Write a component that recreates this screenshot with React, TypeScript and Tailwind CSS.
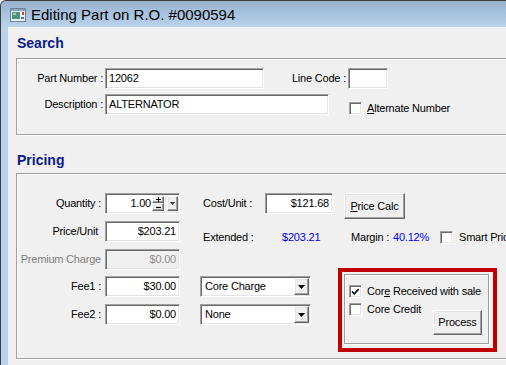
import React from 'react';

const sunken =
  'border border-t-[#a0a0a0] border-l-[#a0a0a0] border-r-white border-b-white shadow-[inset_1px_1px_0_#696969,inset_-1px_-1px_0_#e3e3e3]';
const raised =
  'border border-t-white border-l-white border-r-[#696969] border-b-[#696969] shadow-[inset_-1px_-1px_0_#a0a0a0,inset_1px_1px_0_#e3e3e3] bg-[#f0f0f0]';
const etched = 'border border-[#a0a0a0] shadow-[inset_1px_1px_0_#fff,1px_1px_0_#fff]';

const TextBox = ({
  value,
  w,
  right,
  disabled,
}: {
  value: string;
  w: string;
  right?: boolean;
  disabled?: boolean;
}) => (
  <div
    className={`${sunken} ${w} h-[21px] flex items-center px-[3px] whitespace-nowrap ${
      right ? 'justify-end' : ''
    } ${disabled ? 'bg-[#f0f0f0] text-[#8d8d8d]' : 'bg-white text-black'}`}
  >
    {value}
  </div>
);

const Arrow = () => (
  <svg width="7" height="4" viewBox="0 0 7 4">
    <path d="M0 0 H7 L3.5 4 Z" fill="#000" />
  </svg>
);

const Select = ({ value }: { value: string }) => (
  <div className={`${sunken} w-[111px] h-[21px] bg-white flex items-center p-[1px]`}>
    <div className="flex-1 pl-[3px] whitespace-nowrap">{value}</div>
    <div className={`${raised} w-[15px] h-[17px] flex items-center justify-center`}>
      <Arrow />
    </div>
  </div>
);

const Checkbox = ({ checked }: { checked?: boolean }) => (
  <div className={`${sunken} w-[13px] h-[13px] bg-white shrink-0 flex items-center justify-center`}>
    {checked && (
      <svg width="9" height="9" viewBox="0 0 9 9">
        <path d="M1 4.5 L3.3 6.8 L7.8 2" stroke="#000" strokeWidth="1.7" fill="none" />
      </svg>
    )}
  </div>
);

const Label = ({ children, gray }: { children: React.ReactNode; gray?: boolean }) => (
  <div
    className={`w-[84px] h-[21px] flex items-center justify-end whitespace-nowrap ${
      gray ? 'text-[#7d7d7d]' : ''
    }`}
  >
    {children}
  </div>
);

const QuantityBox = () => (
  <div className={`${sunken} w-[75px] h-[21px] flex p-[1px]`}>
    <div className="w-[45px] bg-white flex items-center justify-end pr-[1px]">1.00</div>
    <div className="flex-1 flex items-center bg-[#f0f0f0]">
      <div className="flex flex-col">
        <div className={`${raised} w-[12px] h-[7px] flex items-center justify-center`}>
          <svg width="5" height="5" viewBox="0 0 5 5">
            <path d="M2.5 0 V5 M0 2.5 H5" stroke="#000" strokeWidth="1" />
          </svg>
        </div>
        <div className={`${raised} w-[12px] h-[8px] flex items-center justify-center`}>
          <svg width="5" height="3" viewBox="0 0 5 3">
            <path d="M0 1.5 H5" stroke="#000" strokeWidth="1.2" />
          </svg>
        </div>
      </div>
      <div className={`${raised} ml-[3px] w-[11px] h-[15px] flex items-center justify-center`}>
        <svg width="5" height="3" viewBox="0 0 5 3">
          <path d="M0 0 H5 L2.5 3 Z" fill="#333" />
        </svg>
      </div>
    </div>
  </div>
);

const TitleIcon = () => (
  <svg width="16" height="14" viewBox="0 0 16 14">
    <rect x="0.5" y="0.5" width="15" height="13" fill="#e9eef3" stroke="#6f8193" />
    <rect x="1" y="1" width="14" height="2" fill="#8aa4bf" />
    <rect x="2" y="4" width="8" height="7" fill="#4c957a" />
    <rect x="3" y="5" width="3" height="2" fill="#9fd0bb" />
    <rect x="12" y="4" width="2" height="3" fill="#d23b3b" />
    <rect x="11" y="9" width="3" height="2" fill="#4a74b5" />
  </svg>
);

export default function App() {
  return (
    <div className="w-[506px] h-[365px] overflow-hidden bg-[#f0f0f0] font-['Liberation_Sans',Arial,sans-serif] text-[11px] tracking-[-0.2px] text-black leading-[13px]">
      <div className="h-full border-t border-l border-[#3c3c3c] rounded-tl-[6px] flex flex-col bg-[#b9d1ea]">
        <div className="h-[26px] shrink-0 bg-linear-to-b from-[#98b3cf] to-[#bad3ec] rounded-tl-[6px] flex items-center pl-[9px] pt-[1px]">
          <TitleIcon />
          <div className="ml-[5px] text-[15px] tracking-normal leading-[18px] text-black whitespace-nowrap">
            Editing Part on R.O. #0090594
          </div>
        </div>
        <div className="flex-1 flex min-h-0">
          <div className="w-[7px] shrink-0 bg-[#b9d1ea]" />
          <div className="flex-1 min-w-0 overflow-hidden bg-[#f0f0f0] pl-[8px] pt-[8px]">
            <div className="ml-[1px] h-[16px] leading-[16px] text-[14px] tracking-normal font-bold text-[#0b1a8c]">
              Search
            </div>
            <div className={`${etched} mt-[7px] w-[520px] h-[77px] pt-[9px]`}>
              <div className="flex h-[21px]">
                <div className="w-[86px] shrink-0 flex items-center justify-end whitespace-nowrap">Part Number :</div>
                <div className="ml-[2px]">
                  <TextBox value="12062" w="w-[159px]" />
                </div>
                <div className="w-[82px] shrink-0 flex items-center justify-end whitespace-nowrap">Line Code :</div>
                <div className="ml-[2px]">
                  <TextBox value="" w="w-[40px]" />
                </div>
              </div>
              <div className="flex h-[21px] mt-[5px]">
                <div className="w-[86px] shrink-0 flex items-center justify-end whitespace-nowrap">Description :</div>
                <div className="ml-[2px]">
                  <TextBox value="ALTERNATOR" w="w-[224px]" />
                </div>
                <div className="ml-[20px] mt-[8px] flex items-center">
                  <Checkbox />
                  <span className="ml-[5px] whitespace-nowrap">
                    <span className="underline">A</span>lternate Number
                  </span>
                </div>
              </div>
            </div>

            <div className="ml-[1px] mt-[17px] h-[16px] leading-[16px] text-[14px] tracking-normal font-bold text-[#0b1a8c]">
              Pricing
            </div>
            <div className={`${etched} mt-[5px] w-[520px] h-[186px] pt-[19px]`}>
              <div className="flex items-start h-[21px]">
                <Label>Quantity :</Label>
                <div className="ml-[4px]">
                  <QuantityBox />
                </div>
                <div className="ml-[23px] w-[62px] shrink-0 h-[21px] flex items-center whitespace-nowrap">Cost/Unit :</div>
                <TextBox value="$121.68" w="w-[68px]" right />
                <div className={`${raised} ml-[11px] w-[61px] h-[26px] shrink-0 flex items-center justify-center whitespace-nowrap`}>
                  <span>
                    <span className="underline">P</span>rice Calc
                  </span>
                </div>
              </div>

              <div className="flex items-start h-[21px] mt-[7px]">
                <Label>Price/Unit&nbsp;</Label>
                <div className="ml-[4px]">
                  <TextBox value="$203.21" w="w-[75px]" right />
                </div>
                <div className="ml-[23px] mt-[10px] flex items-center whitespace-nowrap">
                  <div className="w-[79px] shrink-0">Extended :</div>
                  <div className="w-[69px] shrink-0 text-[#0000ff]">$203.21</div>
                  <div className="w-[42px] shrink-0">Margin :</div>
                  <div className="w-[47px] shrink-0 text-[#0000ff]">40.12%</div>
                  <Checkbox />
                  <div className="ml-[6px]">Smart Price</div>
                </div>
              </div>

              <div className="flex items-start mt-[7px]">
                <div className="flex flex-col shrink-0">
                  <div className="flex items-start h-[21px]">
                    <Label gray>Premium Charge</Label>
                    <div className="ml-[4px]">
                      <TextBox value="$0.00" w="w-[75px]" right disabled />
                    </div>
                  </div>
                  <div className="flex items-start h-[21px] mt-[6px]">
                    <Label>Fee1 :</Label>
                    <div className="ml-[4px]">
                      <TextBox value="$30.00" w="w-[75px]" right />
                    </div>
                    <div className="ml-[20px]">
                      <Select value="Core Charge" />
                    </div>
                  </div>
                  <div className="flex items-start h-[21px] mt-[7px]">
                    <Label>Fee2 :</Label>
                    <div className="ml-[4px]">
                      <TextBox value="$0.00" w="w-[75px]" right />
                    </div>
                    <div className="ml-[20px]">
                      <Select value="None" />
                    </div>
                  </div>
                </div>

                <div className="ml-[27px] mt-[19px] w-[159px] h-[84px] shrink-0 border-4 border-[#c00000] pl-[2px] pt-[2px]">
                  <div className={`${etched} w-[145px] h-[70px] pt-[10px] pl-[4px] pr-[6px]`}>
                    <div className="flex items-center h-[13px]">
                      <Checkbox checked />
                      <span className="ml-[5px] whitespace-nowrap">
                        Cor<span className="underline">e</span> Received with sale
                      </span>
                    </div>
                    <div className="flex items-start mt-[5px]">
                      <div className="flex items-center h-[13px]">
                        <Checkbox />
                        <span className="ml-[5px] whitespace-nowrap">Core Credit</span>
                      </div>
                      <div className={`${raised} ml-auto mt-[7px] w-[49px] h-[25px] flex items-center justify-center`}>
                        Process
                      </div>
                    </div>
                  </div>
                </div>
              </div>
            </div>
          </div>
        </div>
      </div>
    </div>
  );
}
